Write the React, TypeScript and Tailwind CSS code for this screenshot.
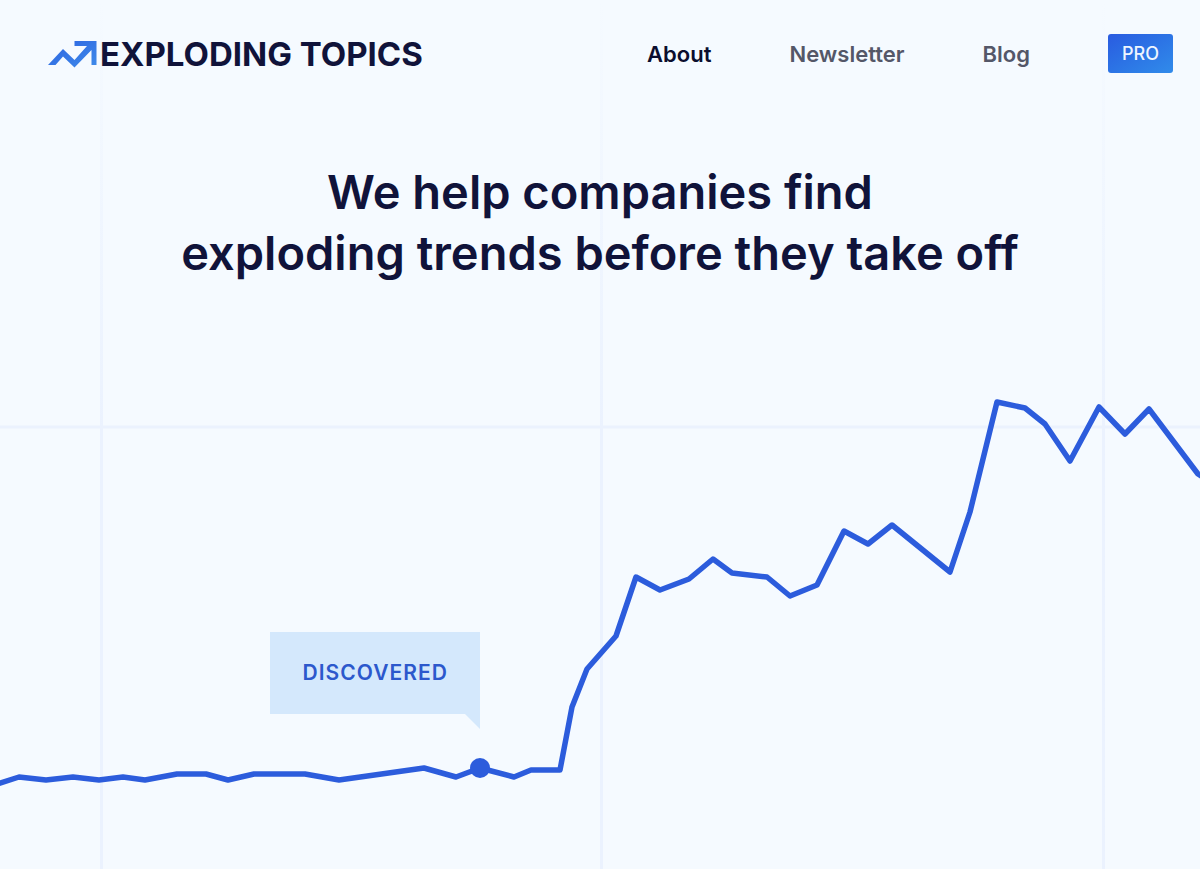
const navLinks = [
  { label: "About", href: "#about", active: true },
  { label: "Newsletter", href: "#newsletter", active: false },
  { label: "Blog", href: "#blog", active: false },
];

const trendPoints = [
  [-6, 405], [19, 397], [46, 400], [73, 397], [99, 400], [123, 397], [145, 400],
  [177, 394], [206, 394], [228, 400], [254, 394], [305, 394], [339, 400],
  [424, 388], [456, 397], [480, 388], [514, 397], [531, 390], [560, 390],
  [572, 327], [587, 289], [616, 256], [636, 197], [660, 210], [689, 199],
  [713, 179], [732, 193], [767, 197], [790, 216], [817, 205], [844, 151],
  [868, 164], [892, 145], [950, 192], [970, 132], [997, 22], [1025, 28],
  [1045, 44], [1070, 81], [1099, 27], [1125, 54], [1149, 29], [1198, 94], [1206, 99],
];

function LogoMark() {
  return (
    <svg viewBox="0 0 50 28" className="h-7 w-[50px] shrink-0" aria-hidden="true">
      <defs>
        <linearGradient id="logo-fill" x1="0" y1="0" x2="1" y2="1">
          <stop offset="0" stopColor="#2b62e0" />
          <stop offset="1" stopColor="#3f8bea" />
        </linearGradient>
      </defs>
      <path
        d="M0 25 L15 9 L26.5 20 L39 6 H26.5 V1 H48.5 V25 H43.5 V10 L26.5 27.5 L15 16.5 L7.5 25 Z"
        fill="url(#logo-fill)"
      />
    </svg>
  );
}

function Header() {
  return (
    <header className="flex items-center justify-between gap-8 pt-[34px] pr-[27px] pl-12">
      <a href="#home" className="flex items-center gap-0.5 text-[#10133a]">
        <LogoMark />
        <span className="text-[33px] leading-[38px] font-bold whitespace-nowrap">EXPLODING TOPICS</span>
      </a>
      <nav className="flex items-center gap-[78px] text-[22px] leading-8 font-semibold">
        {navLinks.map((link) => (
          <a
            key={link.label}
            href={link.href}
            className={link.active ? "text-[#0b0e2e]" : "text-[#545768]"}
          >
            {link.label}
          </a>
        ))}
        <a
          href="#pro"
          className="rounded-[3px] bg-linear-to-br from-[#2a5be0] to-[#318bea] px-[14px] py-[6px] text-lg leading-[27px] font-medium text-[#eef5ff]"
        >
          PRO
        </a>
      </nav>
    </header>
  );
}

// Vertical guides, faded out behind the header
function GridLines() {
  return (
    <div className="absolute inset-0" aria-hidden="true">
      <div className="absolute inset-y-0 left-[8.33%] w-[3px] bg-linear-to-b from-transparent via-[#ebf2fe] via-50% to-[#ebf2fe]" />
      <div className="absolute inset-y-0 left-1/2 w-[3px] bg-linear-to-b from-transparent via-[#ebf2fe] via-50% to-[#ebf2fe]" />
      <div className="absolute inset-y-0 left-[91.83%] w-[3px] bg-linear-to-b from-transparent via-[#ebf2fe] via-50% to-[#ebf2fe]" />
    </div>
  );
}

function TrendChart() {
  return (
    <div className="relative">
      <svg viewBox="0 0 1200 489" className="block w-full" role="img" aria-label="Trend growth over time">
        <line x1="0" y1="47" x2="1200" y2="47" stroke="#ebf2fe" strokeWidth="3" />
        <polyline
          points={trendPoints.map((p) => p.join(",")).join(" ")}
          fill="none"
          stroke="#2c5cdc"
          strokeWidth="5.5"
          strokeLinejoin="round"
          strokeLinecap="round"
        />
        <circle cx="480" cy="388" r="10" fill="#2c5cdc" />
      </svg>

      {/* callout, its tail points at the marker */}
      <div className="absolute right-[60%] bottom-[31.6%] bg-[#d4e8fc] px-8 py-[25px] text-[21px] leading-8 font-semibold tracking-wider text-[#2c58cc]">
        DISCOVERED
        <svg viewBox="0 0 15 15" className="absolute top-full right-0 size-[15px]" aria-hidden="true">
          <path d="M0 0 H15 V15 Z" fill="#d4e8fc" />
        </svg>
      </div>
    </div>
  );
}

export default function App() {
  return (
    <main className="relative min-h-screen overflow-hidden bg-[#f5faff] font-['Inter',sans-serif]">
      <GridLines />
      <div className="relative flex min-h-screen flex-col">
        <Header />
        <h1 className="mt-[88px] px-6 text-center text-[47px] leading-[61px] font-semibold text-[#10133a]">
          We help companies find
          <br />
          exploding trends before they take off
        </h1>
        <div className="mt-auto pt-10">
          <TrendChart />
        </div>
      </div>
    </main>
  );
}
